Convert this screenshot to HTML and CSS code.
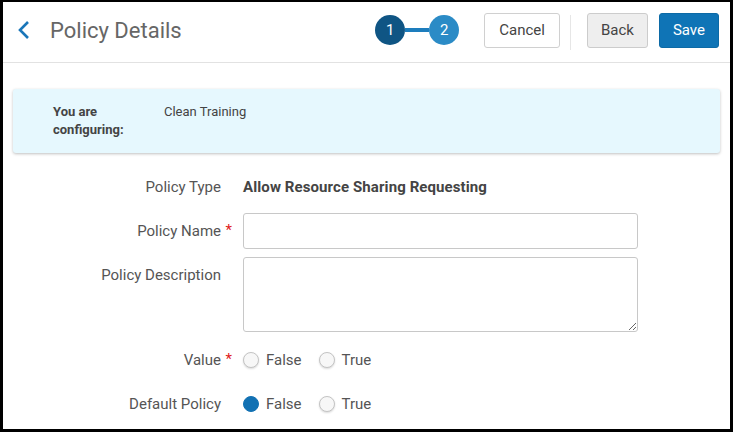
FILE: index.html
```html
<!DOCTYPE html>
<html lang="en">

<head>
  <meta charset="UTF-8">
  <meta name="viewport" content="width=device-width, initial-scale=1.0">

  <title>Policy Details</title>
  <link rel="stylesheet" href="styles.css">
</head>

<body>
  <div class="page">
    <header class="page-header">
      <a class="back-link" href="#" title="Back">
        <svg width="14" height="20" viewBox="0 0 14 20">
          <polyline points="11,2 3,10 11,18" fill="none" stroke="#1a76b9" stroke-width="2.6" />
        </svg>
      </a>
      <h1 class="page-title">Policy Details</h1>

      <div class="stepper">
        <span class="step step-done">1</span>
        <span class="step-line"></span>
        <span class="step step-current">2</span>
      </div>

      <button type="button" class="btn">Cancel</button>
      <span class="btn-separator"></span>
      <button type="button" class="btn btn-grey">Back</button>
      <button type="button" class="btn btn-primary">Save</button>
    </header>

    <div class="info-box">
      <div class="info-label">You are configuring:</div>
      <div class="info-value">Clean Training</div>
    </div>

    <form class="policy-form">
      <div class="form-row">
        <label class="form-label">Policy Type</label>
        <div class="form-text">Allow Resource Sharing Requesting</div>
      </div>

      <div class="form-row">
        <label class="form-label" for="policy-name">Policy Name <span class="required">*</span></label>
        <input type="text" id="policy-name" class="form-input">
      </div>

      <div class="form-row">
        <label class="form-label" for="policy-description">Policy Description</label>
        <textarea id="policy-description" class="form-input form-textarea"></textarea>
      </div>

      <div class="form-row radio-row">
        <label class="form-label">Value <span class="required">*</span></label>
        <div class="radio-group">
          <span class="radio"></span><span class="radio-text">False</span>
          <span class="radio"></span><span class="radio-text">True</span>
        </div>
      </div>

      <div class="form-row radio-row">
        <label class="form-label">Default Policy</label>
        <div class="radio-group">
          <span class="radio radio-checked"></span><span class="radio-text">False</span>
          <span class="radio"></span><span class="radio-text">True</span>
        </div>
      </div>
    </form>
  </div>
</body>
</html>
```

FILE: styles.css
```css
/* Policy details page */

html,
body {
  margin: 0;
  height: 100%;
}

body {
  background-color: #000;
  font-family: Roboto, "Liberation Sans", sans-serif;
  color: #555;
}

.page {
  margin: 2px 3px 0 3px;
  height: 427px;
  background-color: #fff;
  overflow: hidden;
}

.page-header {
  display: flex;
  align-items: center;
  height: 61px;
  box-sizing: border-box;
  padding: 0 11px 4px 14px;
  border-bottom: 1px solid #e2e2e2;
}

.back-link {
  display: flex;
  width: 14px;
  height: 20px;
}

.page-title {
  margin: 0 0 0 19px;
  font-size: 22px;
  font-weight: 400;
  color: #666;
  flex: 1;
}

.stepper {
  display: flex;
  align-items: center;
  margin-right: 25px;
}

.step {
  width: 30px;
  height: 30px;
  border-radius: 50%;
  color: #fff;
  font-size: 15px;
  display: flex;
  align-items: center;
  justify-content: center;
}

.step-done {
  background-color: #0f5584;
}

.step-current {
  background-color: #2b8bc6;
}

.step-line {
  width: 24px;
  height: 4px;
  background-color: #1d7dbd;
}

.btn {
  height: 35px;
  padding: 0 14px;
  font-family: inherit;
  font-size: 15px;
  color: #444;
  background-color: #fff;
  border: 1px solid #d0d0d0;
  border-radius: 3px;
}

.btn-separator {
  width: 1px;
  height: 35px;
  margin: 4px 16px 0 10px;
  background-color: #e6e6e6;
}

.btn-grey {
  padding: 0 13px;
  background-color: #eee;
  border-color: #ccc;
}

.btn-primary {
  margin-left: 11px;
  padding: 0 13px;
  background-color: #0f74b6;
  border-color: #0c6aa6;
  color: #fff;
}

.info-box {
  display: flex;
  margin: 26px 10px 0 10px;
  padding: 14px 40px;
  background-color: #e6f8fe;
  border-radius: 3px;
  box-shadow: 0 1px 3px rgba(0, 0, 0, 0.25);
  font-size: 13px;
  line-height: 18px;
  color: #444;
}

.info-label {
  width: 111px;
  font-weight: 700;
  padding-right: 30px;
  box-sizing: border-box;
}

.policy-form {
  margin-top: 16px;
  display: flex;
  flex-direction: column;
  gap: 8px;
}

.form-row {
  display: flex;
  align-items: flex-start;
  font-size: 15px;
  line-height: 18px;
}

.form-label {
  position: relative;
  width: 229px;
  padding: 9px 11px 9px 0;
  box-sizing: border-box;
  text-align: right;
  color: #555;
}

.required {
  position: absolute;
  right: 0;
  top: 8px;
  color: #e0201b;
}

.form-text {
  margin-left: 11px;
  padding: 9px 0;
  font-weight: 700;
  color: #444;
  letter-spacing: 0.1px;
}

.form-input {
  margin-left: 11px;
  width: 395px;
  height: 36px;
  box-sizing: border-box;
  border: 1px solid #c8c8c8;
  border-radius: 3px;
  background-color: #fff;
  font-family: inherit;
  font-size: 15px;
}

.form-textarea {
  height: 75px;
  resize: vertical;
}

.radio-row {
  margin-top: 2px;
}

.radio-row + .radio-row {
  margin-top: 0;
}

.radio-group {
  display: flex;
  align-items: center;
  height: 36px;
  margin-left: 11px;
}

.radio {
  width: 16px;
  height: 16px;
  box-sizing: border-box;
  border-radius: 50%;
  border: 1px solid #c4c4c4;
  background-color: #f7f7f7;
  box-shadow: 0 1px 2px rgba(0, 0, 0, 0.15);
}

.radio-checked {
  border-color: #1271b3;
  background-color: #1271b3;
  box-shadow: none;
}

.radio-text {
  margin-left: 7px;
  margin-right: 17px;
  color: #555;
}
```
